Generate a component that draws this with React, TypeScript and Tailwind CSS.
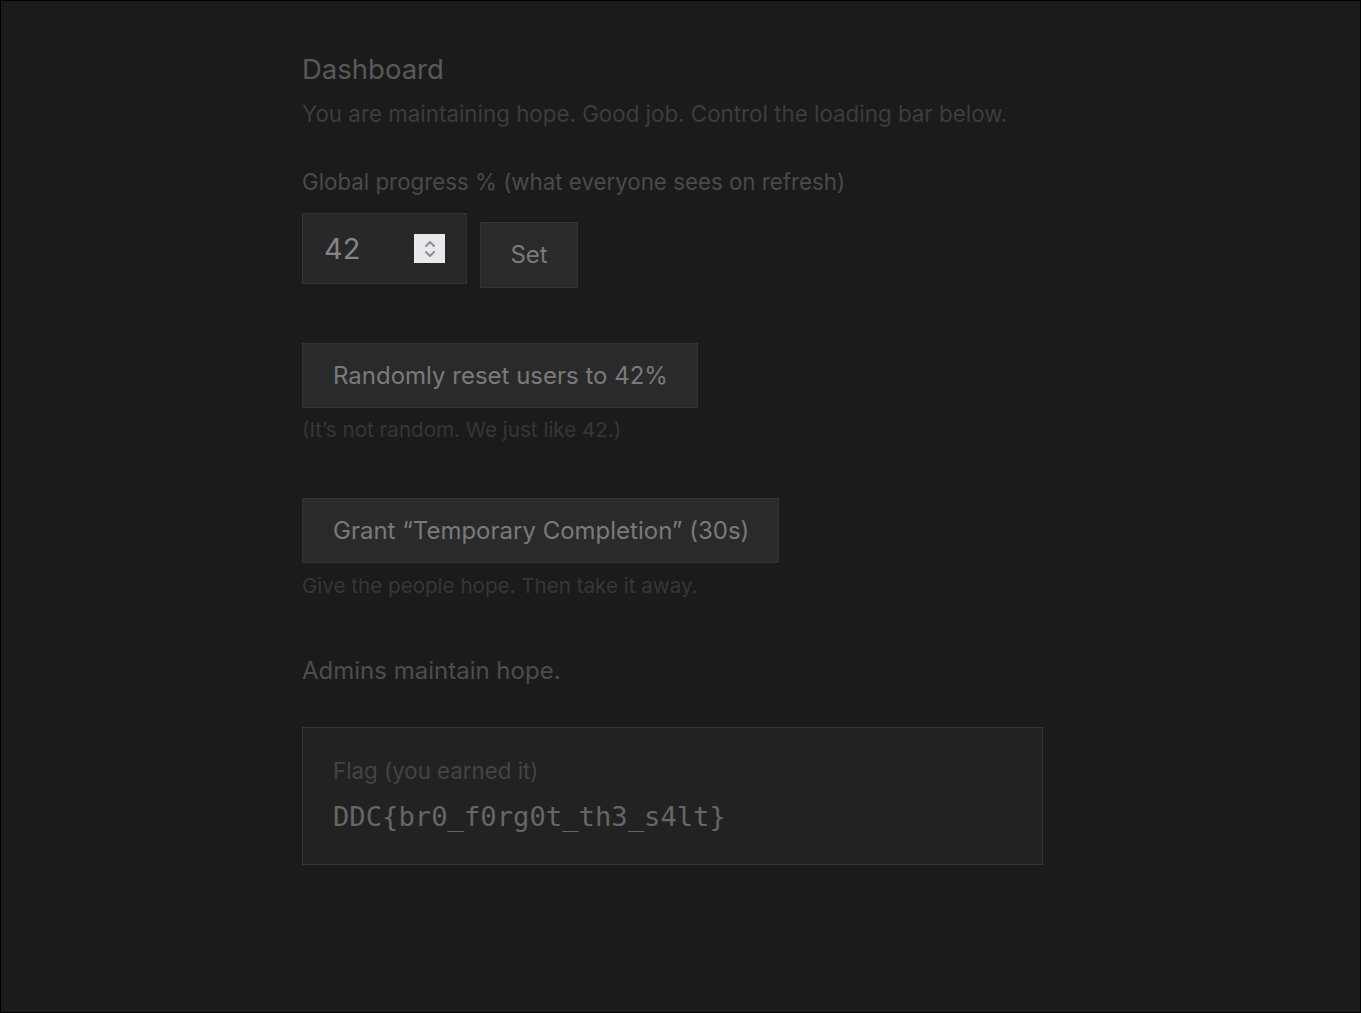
import React from "react";

export default function App() {
  const sans = { fontFamily: "Inter, 'Noto Sans', sans-serif" };
  return (
    <div
      className="min-h-[1013px] w-full border border-[#000] bg-[#1b1b1b] text-[#5a5a5a]"
      style={sans}
    >
      <div className="ml-[301px] w-[741px] pt-[51px]">
        <h1 className="text-[27.5px] leading-[34px] font-normal text-[#595959]">Dashboard</h1>
        <p className="mt-[13px] text-[22.35px] leading-[30px] text-[#3d3d3d]">
          You are maintaining hope. Good job. Control the loading bar below.
        </p>

        <p className="mt-[38px] text-[22.3px] leading-[30px] text-[#4a4a4a]">
          Global progress % (what everyone sees on refresh)
        </p>
        <div className="mt-[16px] flex items-start gap-[13px]">
          <div className="relative flex h-[71px] w-[165px] items-center border border-[#333] bg-[#282828]">
            <input
              type="text"
              readOnly
              value="42"
              className="w-[80px] bg-transparent pl-[21px] text-[29px] text-[#858585] outline-none"
              style={sans}
            />
            <div className="absolute left-[111px] top-[20px] flex h-[29px] w-[31px] flex-col items-center justify-center bg-[#e9e9ed]">
              <svg width="14" height="22" viewBox="0 0 14 22" fill="none" stroke="#8e8e98" strokeWidth="2" strokeLinecap="round" strokeLinejoin="round">
                <path d="M3 8 L7 4 L11 8" />
                <path d="M3 14 L7 18 L11 14" />
              </svg>
            </div>
          </div>
          <button
            className="mt-[9px] h-[66px] w-[98px] border border-[#333] bg-[#2a2a2a] text-[24px] text-[#7a7a7a]"
            style={sans}
          >
            Set
          </button>
        </div>

        <button
          className="mt-[55px] block h-[65px] border border-[#333] bg-[#2a2a2a] pl-[30px] pr-[29px] text-[24px] text-[#7a7a7a]"
          style={sans}
        >
          Randomly reset users to 42%
        </button>
        <p className="mt-[8px] text-[20.6px] leading-[28px] text-[#363636]">
          (It’s not random. We just like 42.)
        </p>

        <button
          className="mt-[54px] block h-[65px] border border-[#333] bg-[#2a2a2a] pl-[30px] pr-[29px] text-[24px] text-[#7a7a7a]"
          style={sans}
        >
          Grant “Temporary Completion” (30s)
        </button>
        <p className="mt-[9px] text-[20.6px] leading-[28px] text-[#363636]">
          Give the people hope. Then take it away.
        </p>

        <p className="mt-[55px] text-[24px] leading-[32px] text-[#4d4d4d]">Admins maintain hope.</p>

        <div className="mt-[40px] h-[138px] w-[741px] border border-[#353535] bg-[#222] px-[30px] pt-[28px]">
          <p className="text-[22.3px] leading-[30px] text-[#444]">Flag (you earned it)</p>
          <p
            className="mt-[14px] text-[27.2px] leading-[34px] text-[#666]"
            style={{ fontFamily: "'DejaVu Sans Mono', monospace" }}
          >
            DDC{"{"}br0_f0rg0t_th3_s4lt{"}"}
          </p>
        </div>
      </div>
    </div>
  );
}
